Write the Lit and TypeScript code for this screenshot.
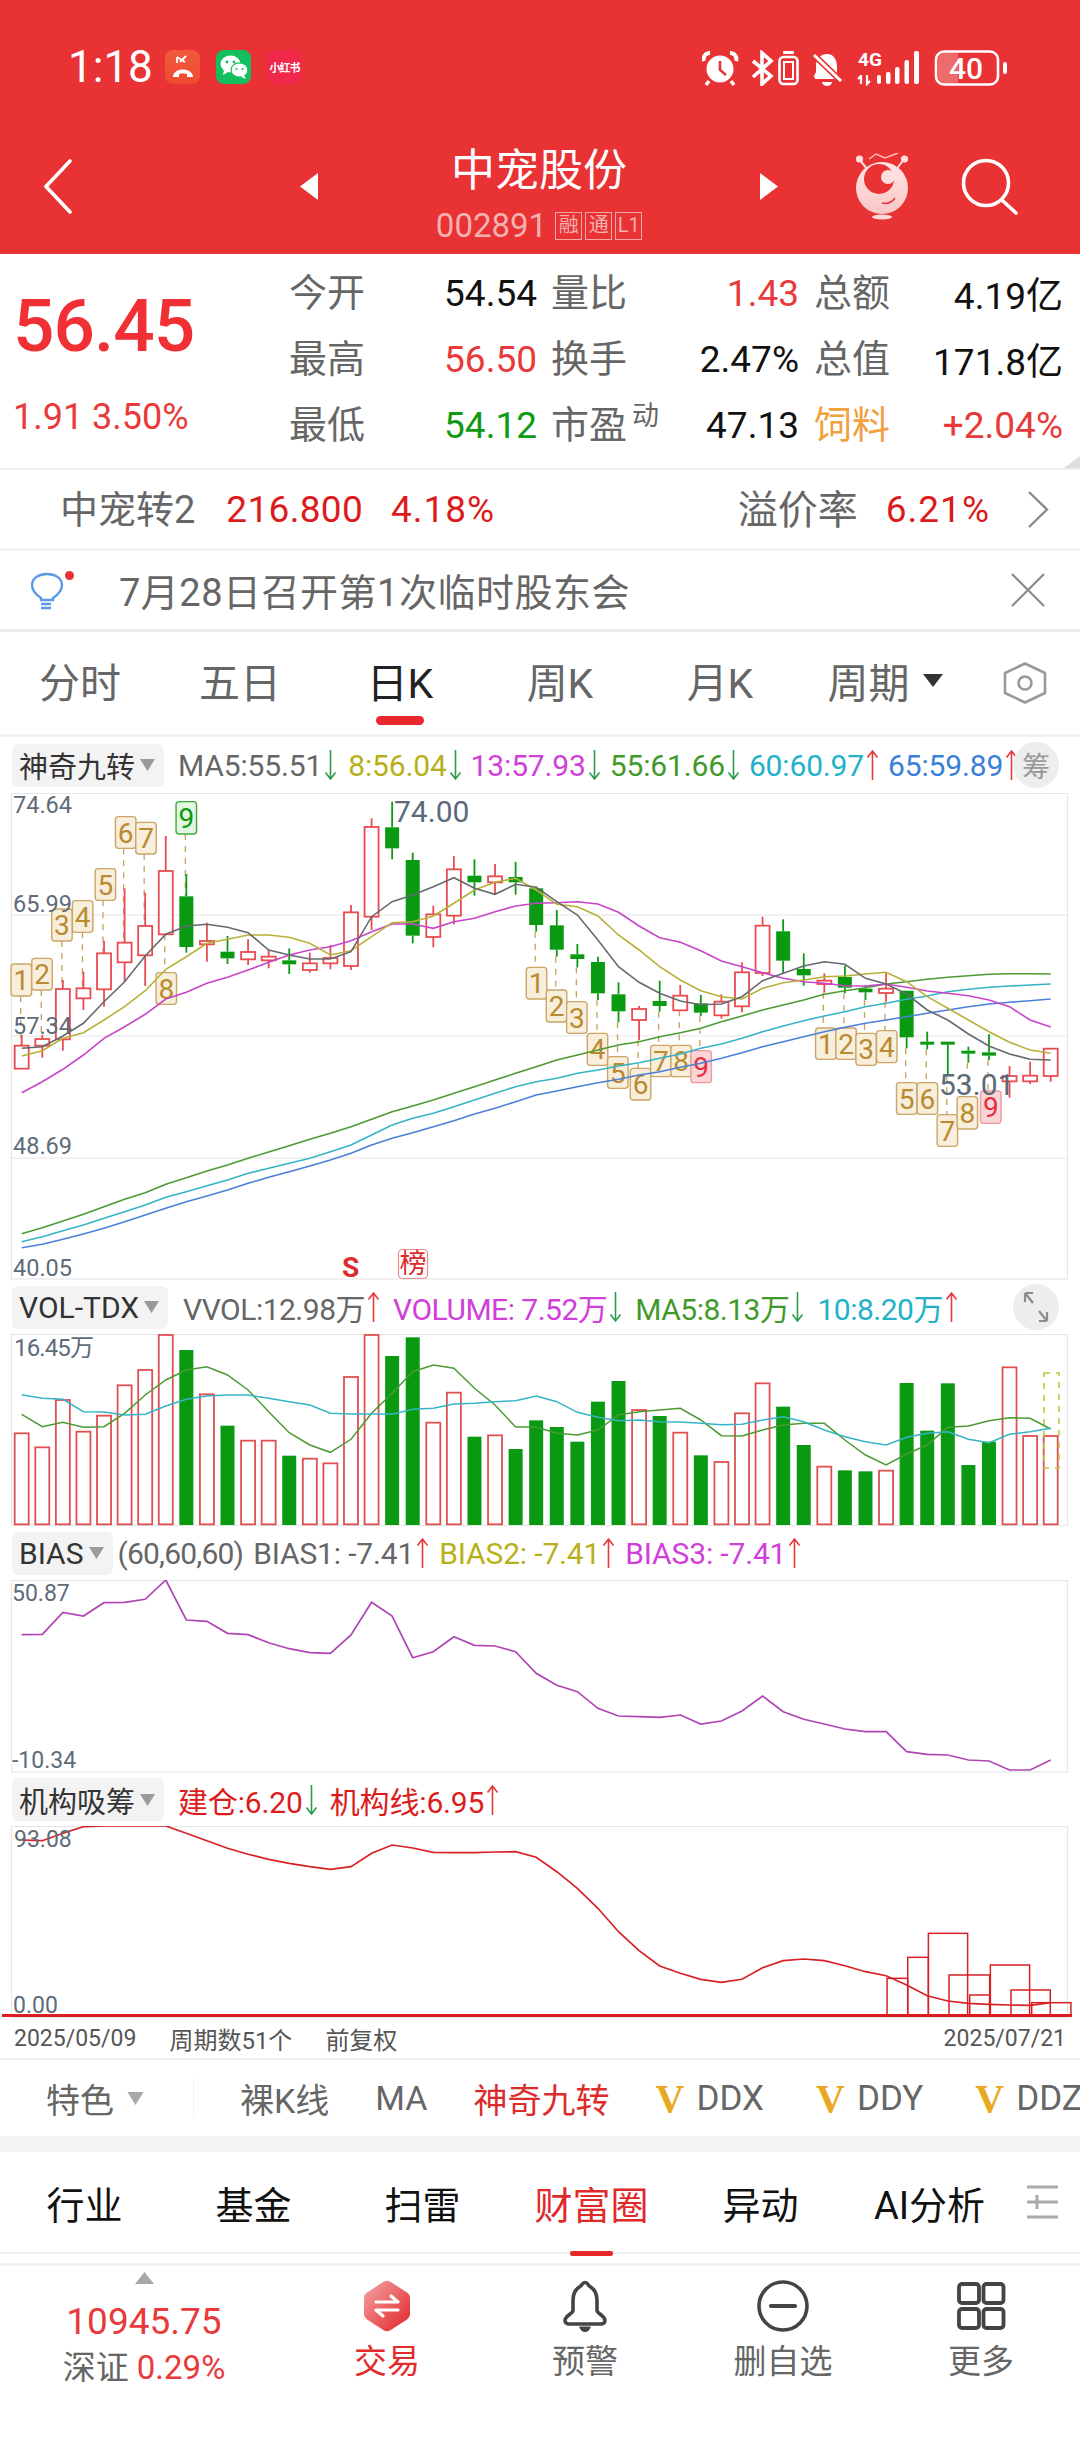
import { LitElement, html, css, svg } from "lit";
import { customElement } from "lit/decorators.js";

const GREEN = "#0a9a12";
const X = (i: number) => 21.7 + 20.58 * i;
const pts = (a: number[], base: number) => a.map((z, i) => `${X(i).toFixed(1)},${(base + z / 3).toFixed(1)}`).join(" ");

// [hi, top, bottom, lo, up?]
const candles: [number, number, number, number, number][] = [
  [765,797,866,866,1],[765,777,797,833,1],[600,627,778,812,1],[575,625,655,690,1],[483,520,628,680,1],[325,488,547,605,1],[338,438,526,618,1],[168,273,463,463,1],[282,349,501,518,0],[428,483,493,545,1],
  [468,515,535,552,0],[478,516,538,555,1],[510,530,541,565,1],[505,541,553,582,0],[518,550,570,578,1],[495,534,550,568,1],[375,397,558,570,1],[115,141,410,450,1],[65,142,205,238,0],[218,240,467,490,0],
  [377,403,471,502,1],[228,268,407,433,1],[238,287,307,347,0],[252,289,307,345,1],[246,291,307,344,0],[320,325,435,455,0],[390,436,509,530,0],[492,523,537,562,0],[530,546,640,660,0],[607,643,694,727,0],
  [678,687,720,780,1],[602,663,678,695,0],[615,647,691,691,1],[645,670,698,708,0],[643,665,706,716,1],[547,577,679,697,1],[410,437,579,588,1],[418,454,542,582,0],[520,567,586,617,0],[580,602,612,638,1],
  [557,591,623,640,0],[615,626,637,660,0],[580,626,639,665,1],[632,632,772,805,0],[755,785,793,808,0],[785,785,793,885,0],[800,812,820,848,0],[763,817,827,840,0],[858,888,904,953,1],[845,887,904,912,1],[805,806,888,905,1],
];
const ma5 = [805,800,768,730,665,605,528,463,438,433,442,458,510,525,537,537,515,410,365,345,320,293,325,343,313,322,365,405,480,560,607,640,663,674,672,650,602,580,558,545,553,595,612,642,690,720,762,798,822,838,840];
const ma8 = [828,812,775,758,720,680,632,568,530,490,478,465,465,472,490,525,512,470,428,425,408,370,330,307,295,330,373,380,408,465,510,560,600,632,650,657,625,608,600,590,588,582,577,605,650,685,720,755,787,810,820];
const ma13 = [938,905,868,825,775,740,703,657,637,610,592,570,547,525,510,500,482,455,432,432,445,425,415,395,378,370,368,365,372,397,438,473,487,512,543,560,578,595,605,610,617,618,612,622,633,640,647,660,680,720,741];
const ma55 = [1361,1343,1323,1303,1280,1258,1238,1213,1193,1173,1155,1135,1116,1097,1078,1060,1040,1018,995,978,960,940,920,900,880,860,840,825,810,795,785,770,758,745,725,708,690,675,660,643,632,623,612,605,598,592,587,583,581,581,582];
const ma60 = [1385,1370,1352,1335,1315,1295,1275,1252,1235,1217,1200,1180,1165,1150,1135,1115,1095,1065,1035,1015,1000,980,960,940,920,905,895,880,870,858,848,835,822,805,792,775,755,738,722,708,695,680,670,658,648,635,628,622,618,615,612];
const ma65 = [1403,1393,1378,1362,1345,1325,1305,1285,1265,1248,1230,1210,1192,1175,1158,1140,1120,1095,1075,1058,1040,1022,1002,985,965,945,933,920,908,898,885,875,862,850,835,818,800,785,770,755,742,730,720,710,700,690,680,672,667,662,657];

const Z3 = (z: number) => z / 2.904;
const Z4 = (z: number) => z / 2.904 + 540;
const nine: [string, number, number, number, string][] = [
  ["1",Z3(62),552,648,"y"],["2",Z3(122),535,630,"y"],["3",Z3(180),387,483,"y"],["4",Z3(240),362,457,"y"],["5",Z3(306),266,361,"y"],["6",Z3(365),110,205,"y"],["7",Z3(424),127,222,"y"],["8",Z3(483),578,673,"y"],["9",Z3(541),65,162,"g"],
  ["1",Z3(1558),562,657,"y"],["2",Z4(48),630,726,"y"],["3",Z4(107),665,760,"y"],["4",Z4(167),760,856,"y"],["5",Z4(226),830,925,"y"],["6",Z4(292),865,960,"y"],["7",Z4(351),796,890,"y"],["8",Z4(410),796,890,"y"],["9",Z4(468),812,908,"r"],
  ["1",Z4(830),744,838,"y"],["2",Z4(889),744,838,"y"],["3",Z4(947),760,856,"y"],["4",Z4(1007),752,848,"y"],["5",Z4(1065),908,1003,"y"],["6",Z4(1125),908,1003,"y"],["7",Z4(1183),1004,1099,"y"],["8",Z4(1241),950,1047,"y"],["9",Z4(1309),933,1030,"r"],
];
const nineAnchor = [1,1,1,1,1,1,1,0,1,0,0,0,0,0,0,0,0,0,0,0,0,0,0,0,0,0,0];
const candleOf = [0,1,2,3,4,5,6,7,8,25,26,27,28,29,30,31,32,33,39,40,41,42,43,44,45,46,47];

const vol: [number, number][] = [[460,1],[502,1],[360,1],[455,1],[407,1],[316,1],[270,1],[165,1],[210,0],[343,1],[437,0],[482,1],[482,1],[527,0],[536,1],[550,1],[291,1],[165,1],[228,0],[172,0],[428,1],[338,1],[470,0],[466,1],[507,0],[421,0],[441,0],[485,0],[365,0],[303,0],[390,1],[408,0],[458,1],[526,0],[546,1],[400,1],[310,1],[380,0],[495,0],[560,1],[571,0],[574,0],[572,1],[309,0],[452,0],[310,0],[555,0],[485,0],[262,1],[468,1],[468,1]];
const volMa5 = [403,440,427,442,440,400,345,300,270,260,285,330,395,458,495,517,478,400,340,275,255,265,325,375,441,441,460,465,450,405,395,390,385,420,467,468,450,435,430,430,480,525,555,522,495,442,438,422,413,415,447];
const volMa10 = [344,355,358,395,396,405,403,378,358,348,345,345,355,365,375,400,402,402,403,388,385,372,370,365,362,348,365,397,412,422,420,425,426,430,434,433,420,410,425,450,470,485,495,472,460,455,478,488,463,455,445];
const bias = [1064,1063,997,1008,968,967,958,900,1020,1024,1060,1064,1088,1106,1118,1120,1065,967,1008,1133,1115,1070,1096,1098,1115,1180,1216,1235,1285,1308,1310,1312,1305,1332,1323,1293,1248,1295,1318,1332,1347,1355,1355,1415,1423,1425,1440,1443,1470,1470,1440];
const inst = [360,362,340,320,318,318,318,318,340,362,385,403,418,430,440,448,440,400,375,384,397,398,398,396,395,412,455,505,565,635,692,738,760,778,787,778,743,722,717,722,737,755,767,795,827,843,850,853,855,856,848];
const instBox: [number, number, number][] = [[1288,1318,775],[1318,1348,712],[1348,1405,640],[1378,1437,765],[1408,1437,825],[1438,1495,735],[1468,1525,810],[1498,1555,848]];

const up = svg`<path d="M6.5 30V1M1.5 7.5 6.5 1l5 6.5"/>`;
const down = svg`<path d="M6.5 0v29M1.5 22.5l5 6.5 5-6.5"/>`;
const arrow = (dir: "u" | "d") => html`<svg class="arr ${dir === "u" ? "au" : "ad"}" width="13" height="30" viewBox="0 0 13 30" aria-hidden="true">${dir === "u" ? up : down}</svg>`;

@customElement("app-root")
export class AppRoot extends LitElement {
  static styles = css`
    :host { display: block; width: 1080px; height: 2438px; background: #fff; overflow: hidden; font-family: Roboto, "Noto Sans CJK SC", sans-serif; color: #222; }
    svg { display: block; flex: none; }
    .head { background: #e83234; height: 254px; color: #fff; display: flex; flex-direction: column; }
    .status { height: 145px; box-sizing: border-box; padding: 50px 0 0 68px; display: flex; align-items: flex-start; }
    .time { font-size: 44px; line-height: 34px; width: 97px; color: #fff; }
    .apps { display: flex; gap: 16px; }
    .app { width: 35px; height: 34px; border-radius: 8px; display: flex; align-items: center; justify-content: center; }
    .a1 { background: linear-gradient(#f25a3c, #ee4a32); }
    .a2 { background: #12bf5e; }
    .a3 { background: #f0284a; font-size: 11px; font-weight: 700; white-space: nowrap; color: #fff; letter-spacing: -1px; }
    .sysicons { margin-left: auto; margin-right: 72px; }
    .nav { height: 109px; display: flex; align-items: center; padding-left: 43px; }
    .ico { margin-bottom: 26px; }
    .title { width: 442px; align-self: flex-start; display: flex; flex-direction: column; align-items: center; }
    .name { font-size: 44px; line-height: 50px; font-weight: 400; margin-top: 1px; }
    .code { margin-top: 15px; display: flex; align-items: center; gap: 3px; color: #f5b0b0; font-size: 33px; line-height: 30px; }
    .code span { margin-right: 5px; }
    .code b { font-weight: 400; font-size: 20px; width: 25px; height: 26px; line-height: 25px; text-align: center; border: 1px solid #f5a5a5; white-space: nowrap; }

    .info { position: relative; height: 216px; box-sizing: border-box; padding: 6px 0 0 13px; display: flex; border-bottom: 2px solid #eeeeee; }
    .left { width: 276px; display: flex; flex-direction: column; }
    .price { font-size: 73px; line-height: 76px; margin-top: 28px; font-weight: 500; color: #f03034; letter-spacing: -1px; }
    .chg { font-size: 36px; line-height: 44px; margin-top: 31px; color: #e83a3a; }
    .grid { display: grid; grid-template-columns: 75px 173px 90px 172px 91px 173px; grid-auto-rows: 66px; align-items: center; font-size: 37px; text-align: right; white-space: nowrap; }
    .lab { color: #666; position: relative; font-size: 38px; margin-bottom: 8px; }
    .val { color: #111; }
    .up { color: #e83a3a; }
    .dn { color: #0e9a12; }
    .or { color: #f2a03c; }
    .sup { position: absolute; left: 100%; top: 9px; margin-left: 5px; font-size: 27px; line-height: 27px; color: #666; }
    .corner { position: absolute; right: 0; bottom: 0; width: 0; height: 0; border-left: 16px solid transparent; border-bottom: 12px solid #dddddd; }

    .bond { height: 78px; display: flex; align-items: center; padding: 0 31px 0 60px; font-size: 37px; border-bottom: 3px solid #f3f3f3; white-space: nowrap; }
    .bond .g { color: #666; font-size: 38px; margin-bottom: 5px; }
    .bond .r { color: #dc1c1c; margin-left: 31px; letter-spacing: .3px; }
    .bond .r.pc { margin-left: 28px; letter-spacing: 1px; }
    .bond .sp { margin-left: auto; font-size: 40px; }
    .bond .chev { margin-left: 38px; }
    .notice { height: 78px; display: flex; align-items: center; padding: 0 35px 0 31px; border-bottom: 3px solid #ececec; font-size: 38px; letter-spacing: .5px; color: #666; }
    .notice .txt { margin-left: 44px; flex: 1; margin-bottom: 2px; }
    .tabs { height: 102px; display: grid; grid-template-columns: repeat(5, 160px) 170px 110px; align-items: center; justify-items: center; font-size: 41px; color: #666; border-bottom: 3px solid #f2f2f2; }
    .tab { position: relative; display: flex; align-items: center; gap: 13px; margin-bottom: 6px; }
    .tab.on { color: #222; }
    .tab.on::after { content: ""; position: absolute; left: 9px; right: 9px; bottom: -15px; height: 9px; border-radius: 5px; background: #e8282c; }

    .legend { display: flex; align-items: center; padding-left: 12px; height: 56px; font-size: 30px; white-space: nowrap; position: relative; }
    .legend.l2, .legend.l3 { height: 54px; }
    .legend.l4 { height: 53px; }
    .pill { height: 43px; background: #f3f3f3; border-radius: 6px; padding: 0 8px 0 7px; display: flex; align-items: center; gap: 4px; color: #333; }
    .pill span { font-size: 29px; }
    .pill.en span { font-size: 30px; }
    .items { display: flex; margin-left: 14px; gap: 12px; letter-spacing: -0.15px; }
    .l1 .items { gap: 9px; margin-left: 14px; }
    .l1 .item:first-child { margin-right: 2px; }
    .l2 .items { letter-spacing: -0.5px; gap: 13px; margin-left: 15px; }
    .l3 .items { margin-left: 5px; gap: 10px; }
    .l3 .args { letter-spacing: -0.8px; color: #666; }
    .item { display: flex; align-items: center; gap: 2px; }
    .arr { fill: none; stroke-width: 1.6; }
    .au { stroke: #e43a3a; }
    .ad { stroke: #2a9d4a; }
    .round { position: absolute; right: 21px; top: 50%; width: 46px; height: 46px; margin-top: -23px; border-radius: 50%; background: #ededed; display: flex; align-items: center; justify-content: center; color: #999; font-size: 28px; }
    .plot { overflow: hidden; }
    .foot { height: 40px; display: flex; align-items: center; padding: 0 14px 0 14px; font-size: 24px; color: #555; border-bottom: 2px solid #f0f0f0; white-space: nowrap; }
    .foot .dt { font-size: 23px; }
    .foot .a { margin-left: 33px; }
    .foot .b { margin-left: 33px; }
    .foot .e { margin-left: auto; }

    .feat { height: 76px; display: flex; align-items: center; padding-left: 46px; font-size: 34px; color: #666; white-space: nowrap; overflow: hidden; }
    .feat .ft { display: flex; align-items: center; gap: 11px; width: 147px; flex: none; }
    .feat .ft svg { width: 21px; height: 13px; }
    .feat .div { width: 1px; height: 39px; background: #f1f1f1; margin-right: 46px; flex: none; }
    .feat .list { display: flex; align-items: center; gap: 46px; flex: none; }
    .feat .on { color: #dc2c2c; }
    .feat .vv { display: flex; align-items: center; gap: 13px; font-size: 35px; }
    .feat .vv + .vv { margin-left: 6px; }
    .feat .vv i { font: 700 40px "Liberation Serif", serif; color: #eaa822; width: 28px; }
    .band { height: 16px; background: #f4f4f4; }
    .btabs { height: 100px; display: grid; grid-template-columns: repeat(6, 169px) 1fr; align-items: center; justify-items: center; font-size: 38px; color: #111; border-bottom: 2px solid #eeeeee; }
    .btabs .on { color: #e02a2a; position: relative; }
    .btabs .on::after { content: ""; position: absolute; left: 36px; width: 43px; bottom: -26px; height: 5px; border-radius: 2px; background: #e8282c; }
    .btabs .ham { justify-self: start; margin-left: 10px; }
    .gap { height: 9px; border-bottom: 3px solid #f2f2f2; }
    .bnav { display: grid; grid-template-columns: 288px repeat(4, 198px); padding-top: 14px; }
    .nc { display: flex; flex-direction: column; align-items: center; color: #666; font-size: 33px; line-height: 40px; }
    .nc .lb { margin-top: 10px; }
    .nc.on { color: #e22c2c; }
    .idx { display: flex; flex-direction: column; align-items: center; margin-top: -8px; }
    .idx .n { font-size: 37px; line-height: 40px; color: #e83a3a; margin-top: 18px; }
    .idx .s { font-size: 33px; line-height: 40px; margin-top: 6px; color: #666; }
    .idx .s em { font-style: normal; color: #e83a3a; }
  `;

  private tri(c = "#9a9a9a") {
    return html`<svg width="17" height="12" viewBox="0 0 17 12" aria-hidden="true"><path d="M1 0h15L8.500 12z" fill="${c}"/></svg>`;
  }

  private statusIcons() {
    return html`<svg class="sysicons" width="306" height="36" viewBox="702 49 306 36" fill="#fff" aria-hidden="true">
      <circle cx="720" cy="68" r="13.500"/><path d="M720 60v9l6 5" fill="none" stroke="#e83234" stroke-width="2.600"/>
      <path d="M704 60a6 6 0 0 1 6-8M736 60a6 6 0 0 0-6-8" fill="none" stroke="#fff" stroke-width="4"/>
      <path d="M709 80l-3 4M731 80l3 4" stroke="#fff" stroke-width="3.500"/>
      <path d="M753 60l18 15-9 8V52l9 8-18 16" fill="none" stroke="#fff" stroke-width="3.600"/>
      <rect x="779.500" y="56" width="18" height="27" rx="4" fill="none" stroke="#fff" stroke-width="2.600"/><rect x="784" y="61" width="9" height="17" fill="none" stroke="#fff" stroke-width="2"/><rect x="783" y="50" width="11" height="3" rx="1"/>
      <path d="M827 53c7 0 10 6 10 13v6l4 6H815l-1-3 2-4v-6c0-7 4-12 11-12z"/><path d="M814 54l27 26" stroke="#e83234" stroke-width="6"/><path d="M814 54l27 26" stroke="#fff" stroke-width="3"/><path d="M822 81h10a5 4 0 0 1-10 0z"/>
      <text x="858" y="65" font-size="19" font-weight="700" font-family="Roboto" fill="#fff">4G</text>
      <path d="M861 74v9M858 78l3-3M867 74v9l3-3" fill="none" stroke="#fff" stroke-width="2.200"/>
      <rect x="877" y="74" width="4" height="9" rx="2"/><rect x="886" y="71" width="4.500" height="12" rx="2"/><rect x="895" y="66" width="4.500" height="17" rx="2"/><rect x="904.500" y="59" width="4.500" height="24" rx="2"/><rect x="914" y="50" width="5" height="33" rx="2"/>
      <rect x="936" y="50.500" width="62" height="33" rx="8" fill="none" stroke="#fff" stroke-width="2.600"/><path d="M938 58a6 6 0 0 1 6-6h14v30h-14a6 6 0 0 1-6-6z" fill="#fff" fill-opacity=".28"/>
      <text x="949" y="78" font-size="30" font-weight="500" font-family="Roboto" fill="#fff">40</text>
      <rect x="1003" y="61" width="4" height="12" rx="2"/>
    </svg>`;
  }

  private mainChart() {
    const grid = [915, 1036, 1158];
    const axis: [string, number][] = [["74.64", 813], ["65.99", 912], ["57.34", 1034], ["48.69", 1154], ["40.05", 1276]];
    const ninePal: Record<string, [string, string, string]> = {
      y: ["#f7eedc", "#cda566", "#b98a30"],
      r: ["#fbd4d6", "#ee9a9e", "#e82a3e"],
      g: ["#e2f6e2", "#3ca83c", "#0a9a12"],
    };
    return html`<svg class="plot" width="1080" height="487" viewBox="0 793 1080 487" aria-hidden="true">
      <rect x="11.500" y="793.500" width="1056" height="485.500" fill="#fff" stroke="#e6e6e6" stroke-width="1.200"/>
      ${grid.map((y) => svg`<line x1="12" x2="1067" y1="${y}" y2="${y}" stroke="#eeeeee" stroke-width="1.400"/>`)}
      ${nine.map((n, k) => {
        const c = candles[candleOf[k]];
        const cx = X(candleOf[k]);
        const from = nineAnchor[k] ? c[1] : c[3];
        const to = nineAnchor[k] ? n[3] : n[2];
        const a = nineAnchor[k] ? to : from;
        const b = nineAnchor[k] ? from : to;
        return svg`<line x1="${cx - 1}" x2="${cx - 1}" y1="${780 + a / 3}" y2="${780 + b / 3}" stroke="#c9a055" stroke-width="1.300" stroke-dasharray="6 6"/>`;
      })}
      ${nine.map(([t, cx, a, b, kind]) => {
        const [f, s, c] = ninePal[kind];
        const y = 780 + a / 3;
        const h = (b - a) / 3;
        return svg`<rect x="${cx - 10.25}" y="${y}" width="20.500" height="${h}" rx="3" fill="${f}" stroke="${s}" stroke-width="1.400"/><text x="${cx}" y="${y + h / 2 + 10}" text-anchor="middle" font-size="28" font-family="Roboto" fill="${c}">${t}</text>`;
      })}
      ${candles.map((c, i) => {
        const cx = X(i);
        const isUp = c[4] === 1;
        const col = isUp ? "#e84c50" : GREEN;
        const top = 780 + c[1] / 3, bot = 780 + c[2] / 3;
        return svg`<line x1="${cx}" x2="${cx}" y1="${780 + c[0] / 3}" y2="${top}" stroke="${col}" stroke-width="1.800"/><line x1="${cx}" x2="${cx}" y1="${bot}" y2="${780 + c[3] / 3}" stroke="${col}" stroke-width="1.800"/>
        ${isUp
          ? svg`<rect x="${cx - 7}" y="${top}" width="14" height="${bot - top}" fill="#fff" stroke="${col}" stroke-width="1.800"/>`
          : svg`<rect x="${cx - 7}" y="${top}" width="14" height="${Math.max(bot - top, 3)}" fill="${col}"/>`}`;
      })}
      ${([[ma55, "#4c9a34"], [ma60, "#35b4c8"], [ma65, "#4a80d8"], [ma13, "#c845c8"], [ma8, "#b9b03a"], [ma5, "#666a70"]] as [number[], string][]).map(
        ([a, c]) => svg`<polyline points="${pts(a, 780)}" fill="none" stroke="${c}" stroke-width="1.600"/>`,
      )}
      ${axis.map(([t, y]) => svg`<text x="13" y="${y}" font-size="23.500" font-family="Roboto" fill="#5e6b78">${t}</text>`)}
      <text x="394" y="822" font-size="30" font-family="Roboto" fill="#5a6a7a">74.00</text>
      <text x="939" y="1095" font-size="30" font-family="Roboto" fill="#5a6a7a">53.01</text>
      <text x="342" y="1277" font-size="28" font-weight="700" font-family="Roboto" fill="#dc2c2c">S</text>
      <rect x="398.500" y="1249.500" width="29" height="29" rx="4" fill="#fff" stroke="#ee8a8a" stroke-width="1.200"/>
      <text x="413" y="1273" text-anchor="middle" font-size="27" font-family="Noto Sans CJK SC" fill="#dc2c2c">榜</text>
    </svg>`;
  }

  private volChart() {
    const Y = (z: number) => 1280 + z / 3;
    return html`<svg class="plot" width="1080" height="192" viewBox="0 1334 1080 192" aria-hidden="true">
      <rect x="11.500" y="1334.500" width="1056" height="191" fill="#fff" stroke="#e6e6e6" stroke-width="1.200"/>
      ${vol.map(([t, u], i) => {
        const cx = X(i);
        return u
          ? svg`<rect x="${cx - 7}" y="${Y(t)}" width="14" height="${Y(733) - Y(t)}" fill="#fff" stroke="#e05050" stroke-width="1.800"/>`
          : svg`<rect x="${cx - 7}" y="${Y(t)}" width="14" height="${Y(735) - Y(t)}" fill="${GREEN}"/>`;
      })}
      <rect x="1044" y="1373" width="15" height="95" fill="none" stroke="#c4c43c" stroke-width="1.600" stroke-dasharray="6 6"/>
      <polyline points="${pts(volMa5, 1280)}" fill="none" stroke="#4c9a34" stroke-width="1.500"/>
      <polyline points="${pts(volMa10, 1280)}" fill="none" stroke="#35b4c8" stroke-width="1.500"/>
      <text x="14" y="1356" font-size="24" font-family="Roboto, Noto Sans CJK SC" fill="#5e6b78" textLength="80">16.45万</text>
    </svg>`;
  }

  private biasChart() {
    return html`<svg class="plot" width="1080" height="193" viewBox="0 1580 1080 193" aria-hidden="true">
      <rect x="11.500" y="1580.500" width="1056" height="191.500" fill="#fff" stroke="#e6e6e6" stroke-width="1.200"/>
      <polyline points="${pts(bias, 1280)}" fill="none" stroke="#b044b4" stroke-width="1.700"/>
      <text x="12" y="1601" font-size="23" font-family="Roboto" fill="#5e6b78">50.87</text>
      <text x="12" y="1768" font-size="23" font-family="Roboto" fill="#5e6b78">-10.34</text>
    </svg>`;
  }

  private instChart() {
    const Y = (z: number) => 1720 + z / 3;
    return html`<svg class="plot" width="1080" height="192" viewBox="0 1826 1080 192" aria-hidden="true">
      <rect x="11.500" y="1826.500" width="1056" height="191" fill="#fff" stroke="#e6e6e6" stroke-width="1.200"/>
      ${instBox.map(([a, b, t]) => svg`<rect x="${a / 1.452}" y="${Y(t)}" width="${(b - a) / 1.452}" height="${Y(887) - Y(t)}" fill="none" stroke="#d82024" stroke-width="1.500"/>`)}
      <polyline points="${pts(inst, 1720)}" fill="none" stroke="#d82024" stroke-width="1.700"/>
      <line x1="2" x2="1072" y1="2015.500" y2="2015.500" stroke="#dc1c20" stroke-width="3"/>
      <text x="14" y="1847" font-size="23" font-family="Roboto" fill="#5e6b78">93.08</text>
      <text x="13" y="2013" font-size="23" font-family="Roboto" fill="#5e6b78">0.00</text>
    </svg>`;
  }

  private legendItem(t: string, c: string, d: "u" | "d") {
    return html`<div class="item" style="color:${c}"><span>${t}</span>${arrow(d)}</div>`;
  }

  render() {
    const rows: [string, string, string, string, string, string, string, string, string][] = [
      ["今开", "54.54", "val", "量比", "1.43", "up", "总额", "4.19亿", "val"],
      ["最高", "56.50", "up", "换手", "2.47%", "val", "总值", "171.8亿", "val"],
      ["最低", "54.12", "dn", "市盈", "47.13", "val", "饲料", "+2.04%", "up"],
    ];
    return html`
      <div class="head">
        <div class="status">
          <div class="time">1:18</div>
          <div class="apps">
            <div class="app a1"><svg width="28" height="28" viewBox="0 0 28 28" aria-hidden="true"><path d="M8 4l8 5M8 4v6M17 3l-6 6" fill="none" stroke="#fff" stroke-width="1.800"/><path d="M4 24c0-10 20-10 20 0l-6 0v-3c-3-1-5-1-8 0v3z" fill="#fff"/></svg></div>
            <div class="app a2"><svg width="30" height="28" viewBox="0 0 30 28" aria-hidden="true"><ellipse cx="11.500" cy="11" rx="10" ry="8.500" fill="#fff"/><path d="M5 17l-1 5 5-3z" fill="#fff"/><ellipse cx="20.500" cy="17" rx="8.500" ry="7.200" fill="#fff" stroke="#12bf5e" stroke-width="1.200"/><path d="M25 22l2 4-5-2z" fill="#fff"/><circle cx="8" cy="9" r="1.400" fill="#12bf5e"/><circle cx="15" cy="9" r="1.400" fill="#12bf5e"/><circle cx="17.500" cy="16" r="1.100" fill="#12bf5e"/><circle cx="23.500" cy="16" r="1.100" fill="#12bf5e"/></svg></div>
            <div class="app a3">小红书</div>
          </div>
          ${this.statusIcons()}
        </div>
        <div class="nav">
          <svg class="ico" width="29" height="55" viewBox="0 0 29 55" fill="none" stroke="#fff" stroke-width="3.600" stroke-linecap="round" stroke-linejoin="round" aria-hidden="true"><path d="M27 2 3 27.500 27 53"/></svg>
          <svg class="ico" style="margin-left:228px" width="18" height="27" viewBox="0 0 18 27" aria-hidden="true"><path d="M18 0v27L0 13.500z" fill="#fff"/></svg>
          <div class="title">
            <div class="name">中宠股份</div>
            <div class="code"><span>002891</span><b>融</b><b>通</b><b>L1</b></div>
          </div>
          <svg class="ico" width="18" height="27" viewBox="0 0 18 27" aria-hidden="true"><path d="M0 0v27L18 13.500z" fill="#fff"/></svg>
          <svg class="ico" style="margin-left:76px" width="56" height="68" viewBox="853 154 56 68" aria-hidden="true">
            <defs><linearGradient id="mg" x1="0" y1="0" x2="0" y2="1"><stop offset="0" stop-color="#ffe6e6"/><stop offset="1" stop-color="#f9c6c6"/></linearGradient></defs>
            <path d="M858 160l9 11M903 160l-8 11" stroke="#ffd8d8" stroke-width="2"/>
            <circle cx="858.500" cy="160" r="3.600" fill="#ffe0e0"/><circle cx="903.500" cy="160" r="3.600" fill="#ffe0e0"/>
            <path d="M868 160l7-5 9 4 13-5" fill="none" stroke="#fbb" stroke-width="1.500"/>
            <circle cx="881" cy="189" r="26" fill="url(#mg)"/>
            <circle cx="878" cy="180" r="15" fill="#e83234"/>
            <circle cx="887" cy="178" r="7" fill="#ffdede"/>
            <path d="M881 204q8 2 13-5" fill="none" stroke="#e83234" stroke-width="1.600"/>
            <ellipse cx="881" cy="218" rx="10" ry="2.600" fill="#ffd8d8"/>
          </svg>
          <svg class="ico" style="margin-left:51px" width="58" height="58" viewBox="958 158 58 58" fill="none" stroke="#fff" stroke-width="3.600" stroke-linecap="round" aria-hidden="true"><circle cx="983" cy="183" r="22.500"/><path d="M1000 201l13 12"/></svg>
        </div>
      </div>

      <div class="info">
        <div class="left">
          <div class="price">56.45</div>
          <div class="chg">1.91 3.50%</div>
        </div>
        <div class="grid">
          ${rows.map(
            (r, i) => html`
              <div class="lab">${r[0]}</div><div class="val ${r[2]}">${r[1]}</div>
              <div class="lab">${r[3]}${i === 2 ? html`<span class="sup">动</span>` : ""}</div><div class="val ${r[5]}">${r[4]}</div>
              <div class="lab ${i === 2 ? "or" : ""}">${r[6]}</div><div class="val ${r[8]}">${r[7]}</div>
            `,
          )}
        </div>
        <div class="corner"></div>
      </div>

      <div class="bond">
        <span class="g">中宠转2</span><span class="r">216.800</span><span class="r pc">4.18%</span>
        <span class="g sp">溢价率</span><span class="r pc">6.21%</span>
        <svg class="chev" width="21" height="37" viewBox="0 0 21 37" fill="none" stroke="#8a8a8a" stroke-width="2.400" aria-hidden="true"><path d="M1 1l18 17.500L1 36"/></svg>
      </div>
      <div class="notice">
        <svg width="44" height="40" viewBox="31 570 44 40" aria-hidden="true">
          <path d="M41 598c-6-4-9-8-9-13 0-7 7-11 15-11s15 4 15 11c0 5-3 9-9 13v2H41z" fill="none" stroke="#5c9ae8" stroke-width="2.400"/>
          <path d="M41 604h10M41 608h10" stroke="#5c9ae8" stroke-width="2.400"/>
          <circle cx="69.500" cy="575.500" r="4.500" fill="#e83234"/>
        </svg>
        <div class="txt">7月28日召开第1次临时股东会</div>
        <svg width="34" height="34" viewBox="0 0 34 34" stroke="#8a8a8a" stroke-width="2.200" aria-hidden="true"><path d="M1 1l32 32M33 1L1 33"/></svg>
      </div>

      <div class="tabs">
        <div class="tab">分时</div><div class="tab">五日</div><div class="tab on">日K</div><div class="tab">周K</div><div class="tab">月K</div>
        <div class="tab">周期<svg width="20" height="13" viewBox="0 0 20 13" aria-hidden="true"><path d="M0 0h20L10 13z" fill="#333"/></svg></div>
        <svg width="46" height="42" viewBox="0 0 46 42" fill="none" stroke="#999" stroke-width="2.600" aria-hidden="true"><path d="M23 1.500 43 11v20L23 40.500 3 31V11z" stroke-linejoin="round"/><circle cx="23" cy="21" r="6.500"/></svg>
      </div>

      <div class="legend l1">
        <div class="pill"><span>神奇九转</span>${this.tri()}</div>
        <div class="items">
          ${this.legendItem("MA5:55.51", "#666", "d")}
          ${this.legendItem("8:56.04", "#b8b018", "d")}
          ${this.legendItem("13:57.93", "#d040d8", "d")}
          ${this.legendItem("55:61.66", "#3f9a2a", "d")}
          ${this.legendItem("60:60.97", "#1fb2c8", "u")}
          ${this.legendItem("65:59.89", "#3a7fd8", "u")}
        </div>
        <div class="round">筹</div>
      </div>
      ${this.mainChart()}

      <div class="legend l2">
        <div class="pill en"><span>VOL-TDX</span>${this.tri()}</div>
        <div class="items">
          ${this.legendItem("VVOL:12.98万", "#666", "u")}
          ${this.legendItem("VOLUME: 7.52万", "#d040d8", "d")}
          ${this.legendItem("MA5:8.13万", "#3f9a2a", "d")}
          ${this.legendItem("10:8.20万", "#1fb2c8", "u")}
        </div>
        <div class="round"><svg width="26" height="30" viewBox="0 0 26 30" fill="none" stroke="#8c8c8c" stroke-width="2.200" aria-hidden="true"><path d="M2 1v9M2 1h8M2 1l8 10M24 29v-9M24 29h-8M24 29l-8-10"/></svg></div>
      </div>
      ${this.volChart()}

      <div class="legend l3">
        <div class="pill en"><span>BIAS</span>${this.tri()}</div>
        <div class="items">
          <div class="item args">(60,60,60)</div>
          ${this.legendItem("BIAS1: -7.41", "#666", "u")}
          ${this.legendItem("BIAS2: -7.41", "#b8b018", "u")}
          ${this.legendItem("BIAS3: -7.41", "#d040d8", "u")}
        </div>
      </div>
      ${this.biasChart()}

      <div class="legend l4">
        <div class="pill"><span>机构吸筹</span>${this.tri()}</div>
        <div class="items">
          ${this.legendItem("建仓:6.20", "#dc1c1c", "d")}
          ${this.legendItem("机构线:6.95", "#dc1c1c", "u")}
        </div>
      </div>
      ${this.instChart()}

      <div class="foot"><span class="dt">2025/05/09</span><span class="a">周期数51个</span><span class="b">前复权</span><span class="dt e">2025/07/21</span></div>

      <div class="feat">
        <div class="ft"><span>特色</span>${this.tri("#aaaaaa")}</div>
        <div class="div"></div>
        <div class="list">
          <span>裸K线</span><span>MA</span><span class="on">神奇九转</span>
          <span class="vv"><i>V</i>DDX</span><span class="vv"><i>V</i>DDY</span><span class="vv"><i>V</i>DDZ</span>
        </div>
      </div>
      <div class="band"></div>
      <div class="btabs">
        <div>行业</div><div>基金</div><div>扫雷</div><div class="on">财富圈</div><div>异动</div><div>AI分析</div>
        <svg class="ham" width="34" height="36" viewBox="0 0 34 36" fill="none" stroke="#aaaaaa" stroke-width="3" aria-hidden="true"><path d="M3 3h31M3 18h31M3 33h31M13 11v14"/></svg>
      </div>
      <div class="gap"></div>
      <div class="bnav">
        <div class="nc idx">
          <svg width="19" height="12" viewBox="0 0 19 12" aria-hidden="true"><path d="M9.500 0 19 12H0z" fill="#a8a8a8"/></svg>
          <div class="n">10945.75</div>
          <div class="s">深证 <em>0.29%</em></div>
        </div>
        <div class="nc on">
          <svg width="48" height="52" viewBox="0 0 48 52" aria-hidden="true">
            <defs><linearGradient id="tg" x1="0" y1="0" x2="1" y2="1"><stop offset="0" stop-color="#f4a6a6"/><stop offset="1" stop-color="#e22226"/></linearGradient></defs>
            <path d="M21 1.500q3-1.600 6 0l17 11q3 2 3 5v17q0 3-3 5l-17 11q-3 1.600-6 0L4 39.500q-3-2-3-5v-17q0-3 3-5z" fill="url(#tg)"/>
            <path d="M13 22h22l-7-6M35 30H13l7 6" fill="none" stroke="#fff" stroke-width="3.200" stroke-linecap="round" stroke-linejoin="round"/>
          </svg>
          <div class="lb">交易</div>
        </div>
        <div class="nc">
          <svg width="48" height="52" viewBox="561 2281 48 52" aria-hidden="true">
            <path d="M585 2283.500c3 0 3 3 5 4 5 3 7 8 7 14v10c0 3 8 5 8 10 0 2-2 3.500-4 3.500h-32c-2 0-4-1.500-4-3.500 0-5 8-7 8-10v-10c0-6 2-11 7-14 2-1 2-4 5-4z" fill="none" stroke="#444" stroke-width="3.600" stroke-linejoin="round"/>
            <path d="M579 2327.500h12q-2 5.500-6 5.500t-6-5.500z" fill="#444"/>
          </svg>
          <div class="lb">预警</div>
        </div>
        <div class="nc">
          <svg width="54" height="52" viewBox="756 2281 54 52" fill="none" stroke="#444" stroke-width="3.600" stroke-linecap="round" aria-hidden="true"><circle cx="783" cy="2307" r="24"/><path d="M771 2307h24" stroke-width="4.200"/></svg>
          <div class="lb">删自选</div>
        </div>
        <div class="nc">
          <svg width="50" height="52" viewBox="956 2281 50 52" fill="none" stroke="#444" stroke-width="3.800" aria-hidden="true"><rect x="959" y="2285" width="20" height="19" rx="3"/><rect x="983.500" y="2285" width="20" height="19" rx="3"/><rect x="959" y="2310" width="20" height="19" rx="3"/><rect x="983.500" y="2310" width="20" height="19" rx="3"/></svg>
          <div class="lb">更多</div>
        </div>
      </div>
    `;
  }
}
